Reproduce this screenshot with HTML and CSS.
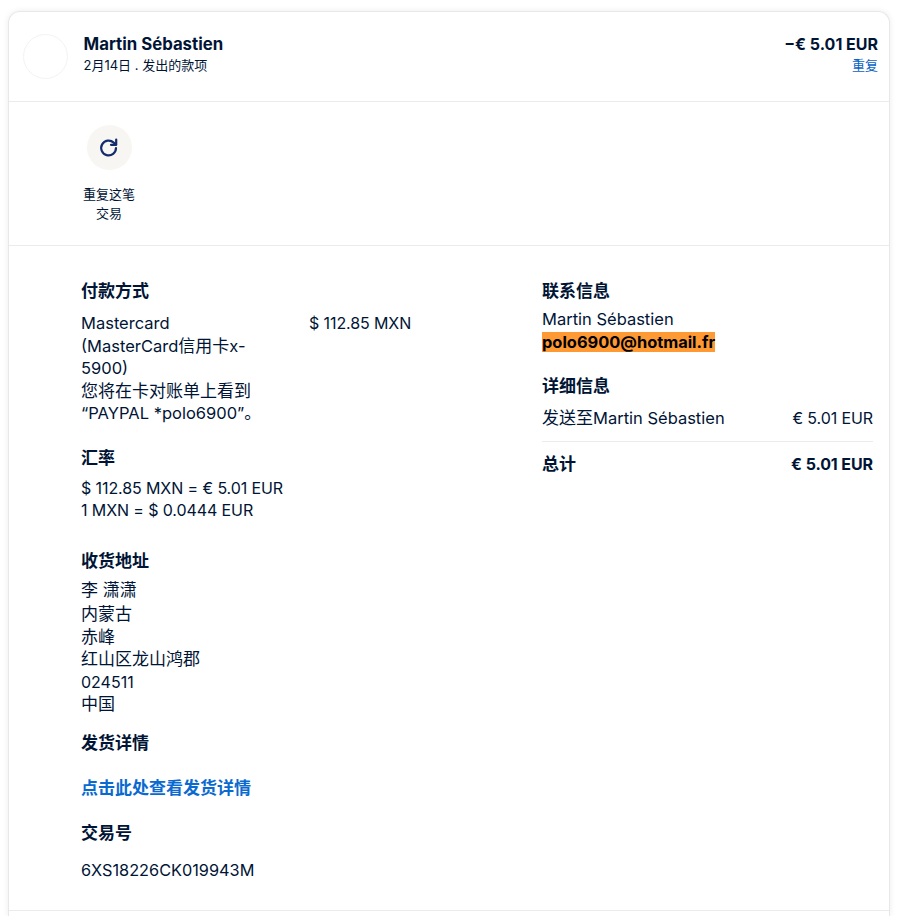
FILE: index.html
```html
<!DOCTYPE html>
<html lang="zh-CN">
<head>
<meta charset="utf-8">
<title>交易详情</title>
<link rel="stylesheet" href="styles.css">
</head>
<body>
<main class="card">
  <header class="head">
    <div class="avatar"></div>
    <div class="who">
      <div class="name">Martin Sébastien</div>
      <div class="sub">2月14日 . 发出的款项</div>
    </div>
    <div class="sum">
      <div class="amount">−€ 5.01 EUR</div>
      <a class="again" href="#">重复</a>
    </div>
  </header>
  <section class="actions">
    <div class="action">
      <div class="action-btn">
        <svg width="24" height="24" viewBox="0 0 24 24" fill="none" stroke="#142c6e" stroke-width="2.2" stroke-linecap="round" stroke-linejoin="round"><path d="M19 12a7.4 7.4 0 1 1-2.3-5.4L19 8.6"/><path d="M19.2 3.6v5.2H14"/></svg>
      </div>
      <div class="action-label">重复这笔交易</div>
    </div>
  </section>
  <section class="details">
    <div class="left">
      <h3 class="title">付款方式</h3>
      <div class="pay">
        <div class="pay-text">Mastercard<br>(MasterCard<span class="cjk">信用卡</span>x-<br>5900)<br><span class="cjk">您将在卡对账单上看到</span><br>“PAYPAL *polo6900”<span class="cjk">。</span></div>
        <div class="money">$ 112.85 MXN</div>
      </div>
      <h3 class="title rate-title">汇率</h3>
      <div class="money rate">$ 112.85 MXN = € 5.01 EUR<br>1 MXN = $ 0.0444 EUR</div>
      <h3 class="title ship-title">收货地址</h3>
      <div class="addr">
        <div class="addr-name">李 潇潇</div>
        <div>内蒙古</div>
        <div>赤峰</div>
        <div>红山区龙山鸿郡</div>
        <div class="zip">024511</div>
        <div>中国</div>
      </div>
      <h3 class="title deliv-title">发货详情</h3>
      <a class="link" href="#">点击此处查看发货详情</a>
      <h3 class="title tx-title">交易号</h3>
      <div class="tx">6XS18226CK019943M</div>
    </div>
    <div class="right">
      <h3 class="title">联系信息</h3>
      <div class="contact">Martin Sébastien<br><mark class="hl">polo6900@hotmail.fr</mark></div>
      <h3 class="title info-title">详细信息</h3>
      <div class="row row-item"><span><span class="cjk">发送至</span>Martin Sébastien</span><span class="money">€ 5.01 EUR</span></div>
      <div class="row row-total"><span class="cjk">总计</span><span class="money">€ 5.01 EUR</span></div>
    </div>
  </section>
</main>
</body>
</html>
```
FILE: styles.css
```css
* { box-sizing: border-box; }
html, body { margin: 0; height: 916px; overflow: hidden; background: #fff; }
body {
  padding: 11px 18px 0 7.5px;
  font-family: Inter, "Noto Sans CJK SC", sans-serif;
  font-size: 16.5px;
  line-height: 22.5px;
  color: #001435;
}
.card {
  height: 905px;
  background: #fff;
  border: 1px solid #e8e8e8;
  border-bottom: 0;
  border-radius: 12px 12px 0 0;
  box-shadow: 0 0 6px rgba(0,0,0,.08);
}
.cjk { font-size: 17px; }
.head {
  height: 90px;
  display: flex;
  align-items: flex-start;
  padding: 21px 11px 0 14.5px;
  border-bottom: 1px solid #ebebeb;
}
.avatar {
  width: 45px;
  height: 45px;
  margin-top: 1px;
  border-radius: 50%;
  border: 1px solid #f3f3f3;
}
.who { margin-left: 15.5px; flex: 1; }
.name { font-size: 16.8px; font-weight: 700; line-height: 22px; }
.sub { font-size: 13px; line-height: 20px; }
.sum { text-align: right; }
.amount { font-size: 16px; font-weight: 700; line-height: 22px; }
.again { display: block; font-size: 13px; line-height: 20px; color: #0a62c2; text-decoration: none; }
.actions {
  height: 144px;
  padding: 23px 0 0 71.5px;
  border-bottom: 1px solid #ebebeb;
}
.action { width: 58px; display: flex; flex-direction: column; align-items: center; }
.action-btn {
  width: 45px;
  height: 45px;
  border-radius: 50%;
  background: #f8f6f2;
  display: flex;
  align-items: center;
  justify-content: center;
}
.action-label { font-size: 13px; line-height: 19px; text-align: center; margin-top: 15px; width: 56px; }
.details {
  display: flex;
  padding: 34px 16px 29px 72.5px;
  border-bottom: 1px solid #ebebeb;
}
.left { width: 461px; flex: none; }
.right { flex: 1; }
.title { margin: 0; font-size: 17px; font-weight: 700; line-height: 22px; }
.money { font-size: 16px; letter-spacing: -.1px; }
.pay { display: flex; margin-top: 10px; }
.pay-text { width: 228px; padding-right: 40px; }
.rate-title { margin-top: 22px; }
.rate { margin-top: 8px; line-height: 22px; }
.ship-title { margin-top: 29px; }
.addr { margin-top: 7px; font-size: 17px; }
.addr-name { margin-bottom: 2px; }
.zip { font-size: 16px; }
.deliv-title { margin-top: 16px; }
.link { display: block; margin-top: 23px; font-size: 17px; font-weight: 700; line-height: 22px; color: #0a6ad0; text-decoration: none; }
.tx-title { margin-top: 23px; }
.tx { margin-top: 15px; font-size: 16.3px; }
.contact { margin-top: 6px; }
.hl { background: #ff9933; color: #000; font-weight: 700; font-size: 16.4px; }
.info-title { margin-top: 22px; }
.row { display: flex; justify-content: space-between; }
.row-item { margin-top: 10px; padding-bottom: 11px; border-bottom: 1px solid #ebebeb; }
.row-total { margin-top: 11px; font-weight: 700; }
```
